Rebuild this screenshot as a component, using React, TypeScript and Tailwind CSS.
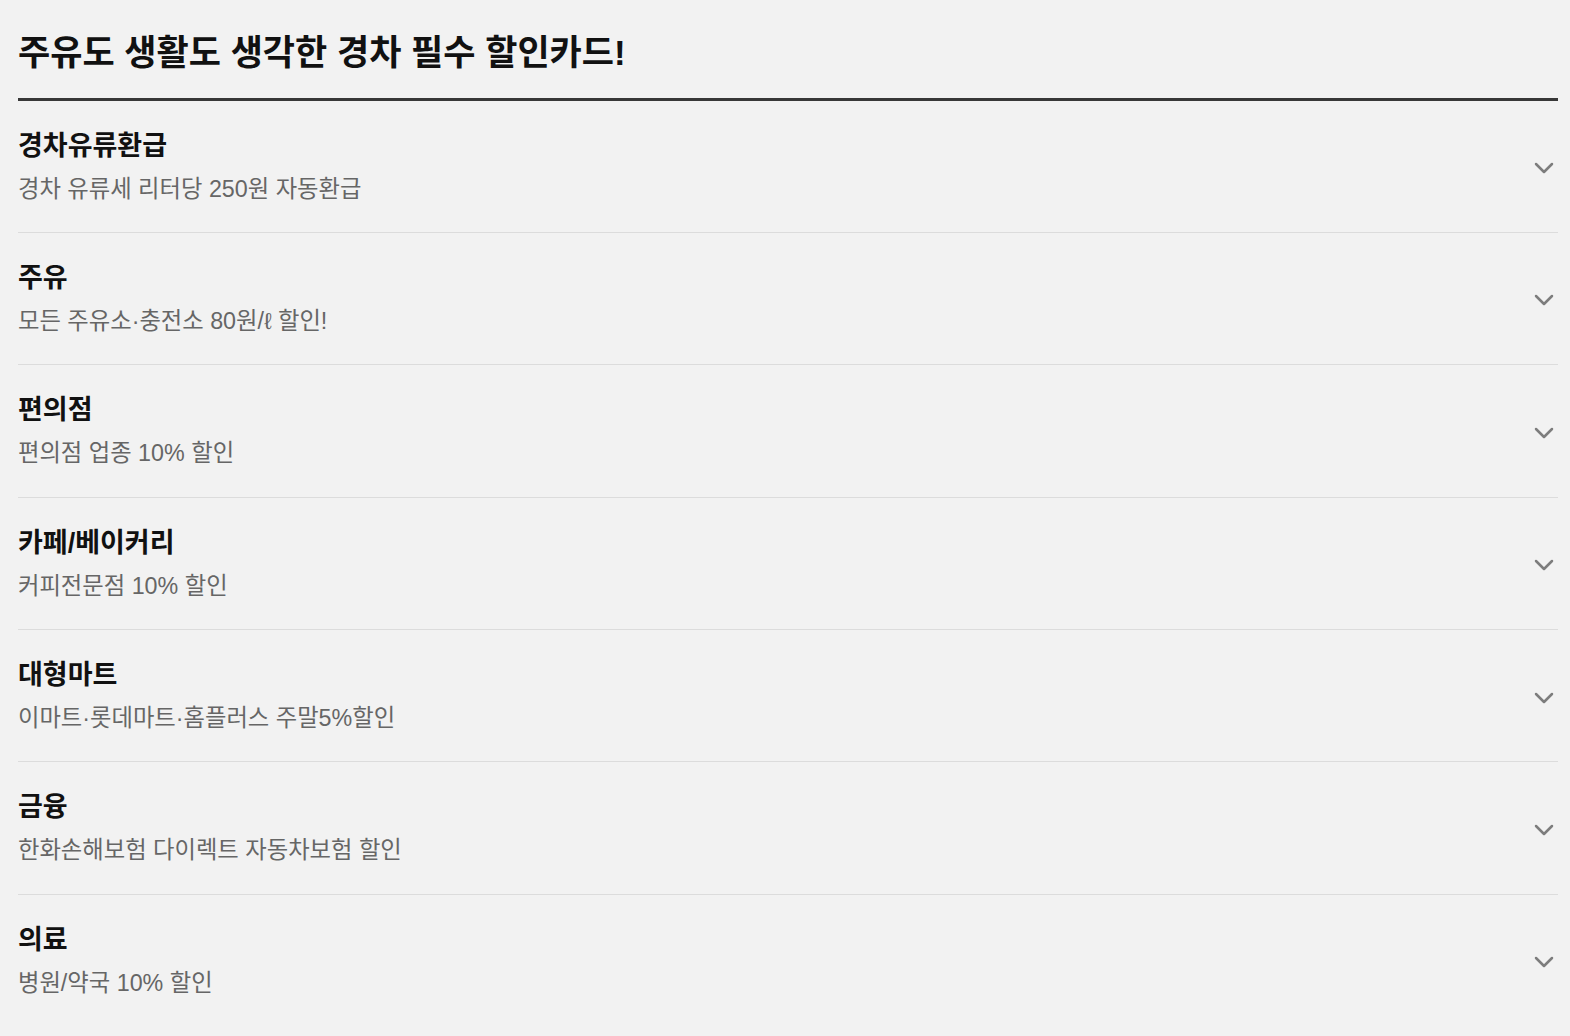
import React from "react";

const items = [
  { title: "경차유류환급", desc: "경차 유류세 리터당 250원 자동환급" },
  { title: "주유", desc: "모든 주유소·충전소 80원/ℓ 할인!" },
  { title: "편의점", desc: "편의점 업종 10% 할인" },
  { title: "카페/베이커리", desc: "커피전문점 10% 할인" },
  { title: "대형마트", desc: "이마트·롯데마트·홈플러스 주말5%할인" },
  { title: "금융", desc: "한화손해보험 다이렉트 자동차보험 할인" },
  { title: "의료", desc: "병원/약국 10% 할인" },
];

function Chevron() {
  return (
    <svg width="20" height="12" viewBox="0 0 20 12" fill="none">
      <path d="M2 2 L10 10 L18 2" stroke="#7d7d7d" strokeWidth="2.5" strokeLinecap="round" strokeLinejoin="round" />
    </svg>
  );
}

export default function App() {
  return (
    <div
      className="min-h-[1036px] w-full bg-[#f2f2f2] pl-[18px] pr-[12px]"
      style={{ fontFamily: '"Liberation Sans", "Noto Sans CJK KR", sans-serif' }}
    >
      <div className="flex h-[98px] items-center">
        <h1 className="pt-[8px] text-[35px] font-bold leading-[40px] text-[#111]">
          주유도 생활도 생각한 경차 필수 할인카드!
        </h1>
      </div>
      <div className="h-[2.5px] bg-[#383838]" />
      <ul>
        {items.map((it, i) => (
          <li
            key={it.title}
            className={`flex items-center justify-between pt-[28px] pb-[28.4px] ${
              i < items.length - 1 ? "border-b border-[#dcdcdc]" : ""
            }`}
          >
            <div className="flex flex-col gap-[11px]">
              <div className="text-[27px] font-bold leading-[34px] text-[#111]">{it.title}</div>
              <div className="text-[23.3px] leading-[30px] text-[#666]">{it.desc}</div>
            </div>
            <div className="mr-[4px] mt-[4px]">
              <Chevron />
            </div>
          </li>
        ))}
      </ul>
    </div>
  );
}
